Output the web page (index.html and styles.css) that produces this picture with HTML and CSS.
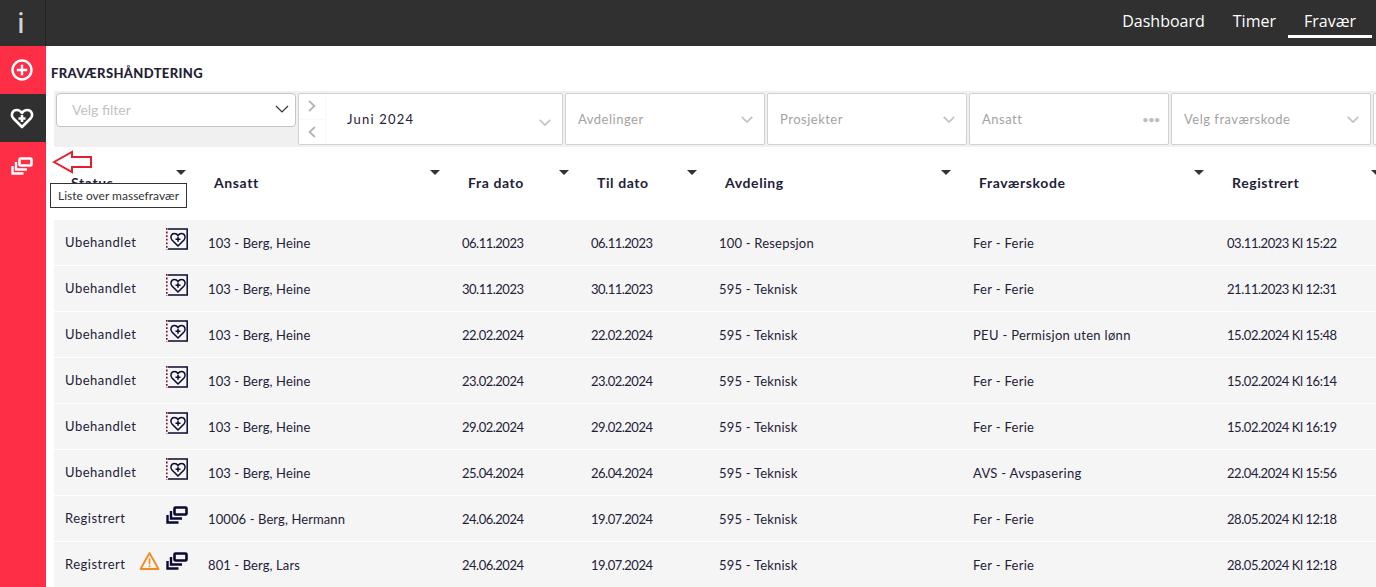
FILE: index.html
```html
<!DOCTYPE html>
<html lang="no">
<head>
  <meta charset="UTF-8" />
  <title>Fravær</title>
  <link rel="stylesheet" href="styles.css">
</head>
<body>
  <svg class="sprites" width="0" height="0">
    <symbol id="stack" viewBox="0 0 22 18">
      <rect x="8.500" y="1.500" width="12" height="7" rx="1" fill="none" stroke="currentColor" stroke-width="2.600"/>
      <path d="M5 5v7.500h11M1.500 9v7.500h11" fill="none" stroke="currentColor" stroke-width="2.400"/>
    </symbol>
    <symbol id="heart" viewBox="0 0 24 22">
      <path d="M12 20 3.500 11.500C.5 8.500 2 3 6.800 3c2.300 0 4 1.200 5.200 3 1.200-1.800 2.900-3 5.200-3C22 3 23.500 8.500 20.500 11.500z" fill="none" stroke="currentColor" stroke-width="2.600" stroke-linejoin="round"/>
      <path d="M12 8v7M8.500 11.500h7" stroke="currentColor" stroke-width="2.600"/>
    </symbol>
    <symbol id="heart-doc" viewBox="0 0 22 22">
      <path d="M2 1h19.200v20H2" fill="none" stroke="currentColor" stroke-width="1.500"/>
      <path d="M.8 0v22" fill="none" stroke="#7a1030" stroke-width="1.600" stroke-dasharray="1.800 1.800"/>
      <path d="M12 18 6 12C3.800 9.700 5 5.500 8.400 5.500c1.700 0 2.800.8 3.600 2 .8-1.200 1.900-2 3.600-2 3.400 0 4.600 4.200 2.400 6.500z" fill="none" stroke="currentColor" stroke-width="1.500"/>
      <path d="M12 8.800v5M9.500 11.300h5" stroke="currentColor" stroke-width="1.500"/>
    </symbol>
    <symbol id="chevron" viewBox="0 0 16 10">
      <path d="M2 2l6 6 6-6" fill="none" stroke="currentColor"/>
    </symbol>
    <symbol id="warn" viewBox="0 0 21 20">
      <path d="M10.500 2 1.500 18h18z" fill="none" stroke="#f58a1f" stroke-width="1.800" stroke-linejoin="round"/>
      <path d="M10.500 7.500v6M10.500 14.500v1.800" stroke="#f58a1f" stroke-width="1.600"/>
    </symbol>
  </svg>

  <aside class="rail">
    <div class="rail-logo">i</div>
    <div class="rail-item">
      <svg width="24" height="24" viewBox="0 0 24 24"><circle cx="12" cy="12" r="9.500" fill="none" stroke="currentColor" stroke-width="2.400"/><path d="M12 6.800v10.400M6.800 12h10.400" stroke="currentColor" stroke-width="2.400"/></svg>
    </div>
    <div class="rail-item rail-item-dark"><svg width="24" height="22"><use href="#heart"/></svg></div>
    <div class="rail-item"><svg width="22" height="18"><use href="#stack"/></svg></div>
  </aside>

  <div class="main">
    <header class="topbar">
      <nav class="topnav">
        <a>Dashboard</a>
        <a>Timer</a>
        <a class="active">Fravær</a>
      </nav>
    </header>

    <h1 class="page-title">FRAVÆRSHÅNDTERING</h1>

    <div class="filters">
      <div class="filter-select">
        <span>Velg filter</span>
        <svg width="16" height="10"><use href="#chevron"/></svg>
      </div>
      <div class="filter-box month-box">
        <div class="month-arrows">
          <div><svg width="10" height="14" viewBox="0 0 10 14"><path d="M2 2l5.500 5L2 12" fill="none" stroke="currentColor" stroke-width="1.800"/></svg></div>
          <div><svg width="10" height="14" viewBox="0 0 10 14"><path d="M8 2L2.500 7 8 12" fill="none" stroke="currentColor" stroke-width="1.800"/></svg></div>
        </div>
        <span class="month-label">Juni 2024</span>
        <svg class="chev" width="14" height="9"><use href="#chevron"/></svg>
      </div>
      <div class="filter-box"><span>Avdelinger</span><svg class="chev" width="14" height="9"><use href="#chevron"/></svg></div>
      <div class="filter-box"><span>Prosjekter</span><svg class="chev" width="14" height="9"><use href="#chevron"/></svg></div>
      <div class="filter-box"><span>Ansatt</span><b class="dots">•••</b></div>
      <div class="filter-box"><span>Velg fraværskode</span><svg class="chev" width="14" height="9"><use href="#chevron"/></svg></div>
      <div class="filter-box filter-rest"></div>
    </div>

    <div class="table">
      <div class="row head">
        <div><span>Status</span><i class="sort"></i></div>
        <div><span>Ansatt</span><i class="sort"></i></div>
        <div><span>Fra dato</span><i class="sort"></i></div>
        <div><span>Til dato</span><i class="sort"></i></div>
        <div><span>Avdeling</span><i class="sort"></i></div>
        <div><span>Fraværskode</span><i class="sort"></i></div>
        <div><span>Registrert</span><i class="sort"></i></div>
      </div>
      <div class="rows">
        <div class="row body">
          <div class="status"><span>Ubehandlet</span><svg class="type-icon" width="22" height="22"><use href="#heart-doc"/></svg></div>
          <div>103 - Berg, Heine</div><div>06.11.2023</div><div>06.11.2023</div><div>100 - Resepsjon</div><div>Fer - Ferie</div><div>03.11.2023 Kl 15:22</div>
        </div>
        <div class="row body">
          <div class="status"><span>Ubehandlet</span><svg class="type-icon" width="22" height="22"><use href="#heart-doc"/></svg></div>
          <div>103 - Berg, Heine</div><div>30.11.2023</div><div>30.11.2023</div><div>595 - Teknisk</div><div>Fer - Ferie</div><div>21.11.2023 Kl 12:31</div>
        </div>
        <div class="row body">
          <div class="status"><span>Ubehandlet</span><svg class="type-icon" width="22" height="22"><use href="#heart-doc"/></svg></div>
          <div>103 - Berg, Heine</div><div>22.02.2024</div><div>22.02.2024</div><div>595 - Teknisk</div><div>PEU - Permisjon uten lønn</div><div>15.02.2024 Kl 15:48</div>
        </div>
        <div class="row body">
          <div class="status"><span>Ubehandlet</span><svg class="type-icon" width="22" height="22"><use href="#heart-doc"/></svg></div>
          <div>103 - Berg, Heine</div><div>23.02.2024</div><div>23.02.2024</div><div>595 - Teknisk</div><div>Fer - Ferie</div><div>15.02.2024 Kl 16:14</div>
        </div>
        <div class="row body">
          <div class="status"><span>Ubehandlet</span><svg class="type-icon" width="22" height="22"><use href="#heart-doc"/></svg></div>
          <div>103 - Berg, Heine</div><div>29.02.2024</div><div>29.02.2024</div><div>595 - Teknisk</div><div>Fer - Ferie</div><div>15.02.2024 Kl 16:19</div>
        </div>
        <div class="row body">
          <div class="status"><span>Ubehandlet</span><svg class="type-icon" width="22" height="22"><use href="#heart-doc"/></svg></div>
          <div>103 - Berg, Heine</div><div>25.04.2024</div><div>26.04.2024</div><div>595 - Teknisk</div><div>AVS - Avspasering</div><div>22.04.2024 Kl 15:56</div>
        </div>
        <div class="row body">
          <div class="status"><span>Registrert</span><svg class="type-icon" width="22" height="18"><use href="#stack"/></svg></div>
          <div>10006 - Berg, Hermann</div><div>24.06.2024</div><div>19.07.2024</div><div>595 - Teknisk</div><div>Fer - Ferie</div><div>28.05.2024 Kl 12:18</div>
        </div>
        <div class="row body">
          <div class="status"><span>Registrert</span><svg class="warn-icon" width="21" height="20"><use href="#warn"/></svg><svg class="type-icon" width="22" height="18"><use href="#stack"/></svg></div>
          <div>801 - Berg, Lars</div><div>24.06.2024</div><div>19.07.2024</div><div>595 - Teknisk</div><div>Fer - Ferie</div><div>28.05.2024 Kl 12:18</div>
        </div>
      </div>
    </div>
  </div>

  <svg class="red-arrow" width="42" height="24" viewBox="0 0 42 24"><path d="M2 12 20 2v5h19v10H20v5z" fill="#fff" stroke="#e2202e" stroke-width="2"/></svg>
  <div class="tip">Liste over massefravær</div>
</body>
</html>
```

FILE: styles.css
```css
* {
  box-sizing: border-box;
}

html, body {
  height: 100%;
}

body {
  margin: 0;
  display: flex;
  overflow: hidden;
  background: #fff;
  color: #1f2138;
  font-family: "Lato", "Noto Sans", sans-serif;
  font-size: 13px;
}

.sprites {
  display: none;
}

.rail {
  width: 46px;
  flex: none;
  background: #ff2e47;
}

.rail-logo {
  height: 46px;
  padding-right: 3px;
  background: #303030;
  border-right: 1px solid #222;
  color: #d4d4d4;
  font: 500 27px/46px "Noto Sans", sans-serif;
  text-align: center;
}

.rail-item {
  height: 48px;
  padding-right: 2px;
  display: flex;
  align-items: center;
  justify-content: center;
  color: #fff;
}

.rail-item-dark {
  background: #303030;
}

.main {
  flex: 1;
  min-width: 0;
}

.topbar {
  height: 46px;
  background: #303030;
  display: flex;
  justify-content: flex-end;
}

.topnav {
  display: flex;
  gap: 12px;
  padding-right: 4px;
}

.topnav a {
  padding: 10px 16px 0;
  height: 38px;
  color: #fff;
  font: 16px/22px "Open Sans", sans-serif;
}

.topnav a:nth-child(2) {
  padding: 10px 0 0;
}

.topnav a.active {
  border-bottom: 3px solid #fff;
}

.page-title {
  margin: 19px 0 0 5px;
  height: 17px;
  font-size: 13px;
  line-height: 17px;
  font-weight: 900;
  letter-spacing: 0.35px;
  color: #1f2138;
}

.filters {
  margin: 9px 0 0 8px;
  height: 56px;
  display: flex;
  gap: 2px;
  padding: 2px 0 0 2px;
  background: #f0f0f0;
  overflow: hidden;
}

.filter-select {
  width: 240px;
  height: 34px;
  flex: none;
  display: flex;
  align-items: center;
  justify-content: space-between;
  padding: 0 5px 2px 15px;
  background: #fff;
  border: 1px solid #c4c4c4;
  border-radius: 4px;
  color: #c2c2c2;
  font-size: 14px;
}

.filter-select svg {
  color: #333;
  stroke-width: 1.2;
}

.filter-box {
  width: 200px;
  height: 52px;
  flex: none;
  display: flex;
  align-items: center;
  justify-content: space-between;
  padding: 0 10px 0 12px;
  background: #fff;
  border: 1px solid #d2d2d2;
  border-radius: 2px;
  color: #a3a3a3;
  letter-spacing: 0.5px;
}

.chev {
  color: #c4c4c4;
  stroke-width: 2;
}

.month-box {
  width: 265px;
  padding-left: 0;
}

.month-box .chev {
  margin-top: 6px;
}

.month-arrows {
  width: 27px;
  height: 100%;
  display: flex;
  flex-direction: column;
  border-right: 1px solid #f8f8f8;
  color: #b4b4b4;
}

.month-arrows div {
  flex: 1;
  display: flex;
  align-items: center;
  justify-content: center;
}

.month-arrows div:first-child {
  border-bottom: 1px solid #f8f8f8;
}

.month-label {
  flex: 1;
  padding-left: 21px;
  color: #1f2138;
  letter-spacing: 1.2px;
}

.filter-rest {
  width: 60px;
}

.dots {
  margin-right: -2px;
  color: #bdbdbd;
  font-size: 10px;
  letter-spacing: 0;
}

.row {
  display: grid;
  grid-template-columns: 143px 254px 129px 128px 254px 253px 177px;
}

.head {
  height: 73px;
  padding: 0 0 3px 25px;
  align-items: center;
  font-size: 14px;
  font-weight: 700;
  letter-spacing: 0.6px;
}

.head > div {
  position: relative;
}

.sort {
  position: absolute;
  top: -4px;
  right: 28px;
  border-left: 5px solid transparent;
  border-right: 5px solid transparent;
  border-top: 5px solid #333;
}

.rows {
  margin-left: 8px;
}

.body {
  height: 46px;
  align-items: center;
  padding-left: 11px;
  background: #f5f5f5;
  border-bottom: 1px solid #fff;
}

.body > div:nth-child(2) { letter-spacing: 0.1px; }
.body > div:nth-child(3),
.body > div:nth-child(4) { letter-spacing: -0.5px; }
.body > div:nth-child(5) { letter-spacing: 0.2px; }
.body > div:nth-child(6) { letter-spacing: 0.3px; }
.body > div:nth-child(7) {
  padding-left: 1px;
  letter-spacing: -0.45px;
}

.status {
  display: flex;
  align-items: center;
  height: 100%;
  padding-right: 20px;
}

.status span {
  margin-right: auto;
  margin-bottom: 2px;
  letter-spacing: 0.5px;
}

.type-icon {
  margin-bottom: 7px;
  color: #0a0a30;
}

.warn-icon {
  margin: 0 6px 7px 0;
}

.red-arrow {
  position: absolute;
  left: 52px;
  top: 150px;
}

.tip {
  position: absolute;
  left: 50px;
  top: 183px;
  height: 25px;
  padding: 0 7px;
  background: #fff;
  border: 1px solid #333;
  font: 12px/23px "Lato", sans-serif;
  color: #333;
}
```
